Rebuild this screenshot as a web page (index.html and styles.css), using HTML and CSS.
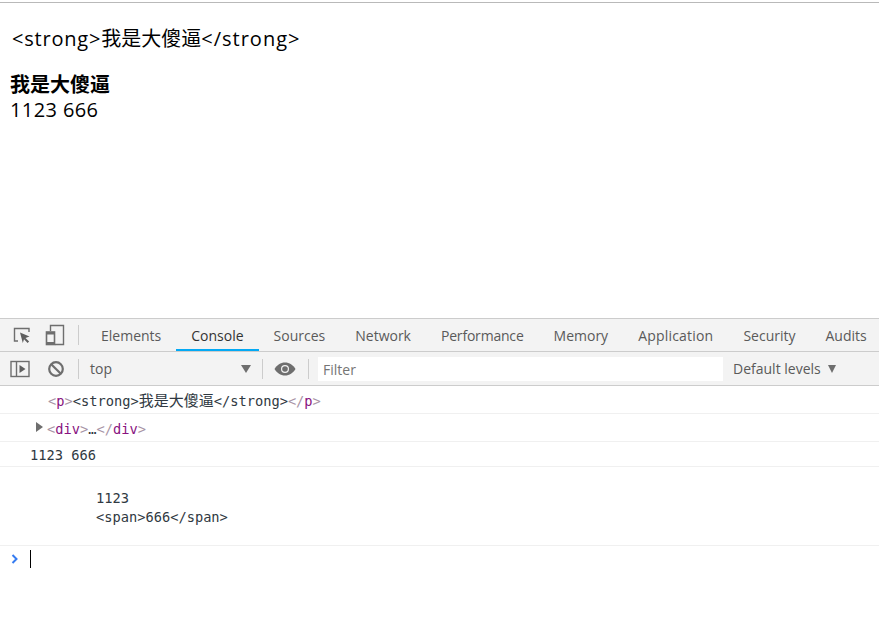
FILE: index.html
```html
<!DOCTYPE html>
<html lang="zh-CN">
<head>
  <meta charset="UTF-8" />
  <title>Console</title>
  <link rel="stylesheet" href="styles.css">
</head>
<body>
  <main class="page">
    <p class="escaped"><span class="latin">&lt;strong&gt;</span>我是大傻逼<span class="latin latin-end">&lt;/strong&gt;</span></p>
    <p class="rendered"><strong>我是大傻逼</strong><br><span class="digits">1123 666</span></p>
  </main>

  <section class="devtools">
    <div class="tabbar">
      <svg class="icon icon-inspect" width="20" height="20" viewBox="0 0 20 20">
        <path d="M6 16H2.5V3.5H17V7" fill="none" stroke="#6e6e6e" stroke-width="1.4"/>
        <path d="M8 7.5l9.5 4-4 1.4 3.6 3.7-1.5 1.4-3.6-3.7-1.2 3.7z" fill="#5f5f5f"/>
      </svg>
      <svg class="icon icon-device" width="20" height="22" viewBox="0 0 20 22">
        <path d="M5.5 7V1.5H18.5V20.500H10" fill="none" stroke="#6e6e6e" stroke-width="1.4"/>
        <rect x="1.500" y="8" width="8" height="12.500" fill="none" stroke="#6e6e6e" stroke-width="1.600"/>
        <rect x="1.500" y="8" width="8" height="2.500" fill="#6e6e6e"/>
        <rect x="1.500" y="18" width="8" height="2.500" fill="#6e6e6e"/>
      </svg>
      <span class="sep"></span>
      <nav class="tabs">
        <a class="tab">Elements</a>
        <a class="tab active">Console</a>
        <a class="tab">Sources</a>
        <a class="tab">Network</a>
        <a class="tab tab-narrow">Performance</a>
        <a class="tab">Memory</a>
        <a class="tab tab-wide">Application</a>
        <a class="tab">Security</a>
        <a class="tab">Audits</a>
      </nav>
    </div>

    <div class="toolbar">
      <svg class="icon icon-sidebar" width="20" height="18" viewBox="0 0 20 18">
        <rect x="1" y="1.500" width="18" height="15" fill="none" stroke="#6e6e6e" stroke-width="1.400"/>
        <path d="M6.500 1.500v15" stroke="#6e6e6e" stroke-width="1.400"/>
        <path d="M9.500 5l6 4-6 4z" fill="#5f5f5f"/>
      </svg>
      <svg class="icon icon-clear" width="18" height="18" viewBox="0 0 18 18">
        <circle cx="9" cy="9" r="6.800" fill="none" stroke="#6e6e6e" stroke-width="2.200"/>
        <path d="M4.200 4.200l9.600 9.600" stroke="#6e6e6e" stroke-width="2.200"/>
      </svg>
      <span class="sep"></span>
      <div class="context">
        <span>top</span>
        <i class="arrow arrow-large"></i>
      </div>
      <span class="sep"></span>
      <svg class="icon icon-eye" width="22" height="14" viewBox="0 0 22 14">
        <path d="M11 .5C6.500 .5 3 3 .5 7c2.500 4 6 6.500 10.500 6.500S19 11 21.500 7C19 3 15.500 .5 11 .5z" fill="#6e6e6e"/>
        <circle cx="11" cy="7" r="4" fill="#f3f3f3"/>
        <circle cx="11" cy="7" r="2.800" fill="#6e6e6e"/>
      </svg>
      <span class="sep"></span>
      <div class="filter">Filter</div>
      <div class="levels">
        <span>Default levels</span>
        <i class="arrow"></i>
      </div>
    </div>

    <div class="console">
      <div class="row row-p"><span class="tag">&lt;<b>p</b>&gt;</span><span class="plain">&lt;strong&gt;<span class="cjk">我是大傻逼</span>&lt;/strong&gt;</span><span class="tag">&lt;/<b>p</b>&gt;</span></div>
      <div class="row row-div"><i class="disclosure"></i><span class="tag">&lt;<b>div</b>&gt;</span><span class="plain">…</span><span class="tag">&lt;/<b>div</b>&gt;</span></div>
      <div class="row row-text">1123 666</div>
      <div class="row row-block">
        <div>1123</div>
        <div>&lt;span&gt;666&lt;/span&gt;</div>
      </div>
      <div class="prompt">
        <svg width="8" height="10" viewBox="0 0 8 10"><path d="M1.500 1l4 4-4 4" fill="none" stroke="#367cf1" stroke-width="2"/></svg>
        <span class="caret"></span>
      </div>
    </div>
  </section>
</body>
</html>
```

FILE: styles.css
```css
* {
  box-sizing: border-box;
}
html,
body {
  height: 100%;
}
body {
  margin: 0;
  display: flex;
  flex-direction: column;
  background: #fff;
  color: #000;
  font-family: "Open Sans", "Noto Sans CJK SC", sans-serif;
  overflow: hidden;
}

.page {
  height: 318px;
  margin-top: 2px;
  border-top: 1px solid #b9b9b9;
  padding: 23px 10px 0;
  font-size: 20px;
  line-height: 26px;
}
.page p {
  margin: 0;
}
.page .escaped {
  padding-left: 2px;
  margin-bottom: 20px;
}
.latin {
  letter-spacing: 0.8px;
}
.latin-end {
  letter-spacing: 1px;
}
.digits {
  letter-spacing: 0.4px;
}
.rendered {
  line-height: 25px;
}
.rendered strong {
  font-weight: 700;
}

.devtools {
  flex: 1;
  display: flex;
  flex-direction: column;
  border-top: 1px solid #ccc;
  margin-top: -2px;
}
.tabbar,
.toolbar {
  display: flex;
  align-items: center;
  background: #f3f3f3;
  border-bottom: 1px solid #ccc;
  color: #5a5a5a;
  font-size: 14px;
}
.tabbar {
  height: 33px;
}
.toolbar {
  height: 34px;
}
.icon {
  flex: none;
}
.icon-inspect {
  margin-left: 12px;
}
.icon-device {
  margin-left: 13px;
}
.sep {
  flex: none;
  width: 1px;
  height: 20px;
  background: #ccc;
}
.tabbar .sep {
  margin-left: 13px;
}
.tabs {
  display: flex;
  height: 100%;
  margin-left: 7px;
}
.tab {
  display: flex;
  align-items: center;
  padding: 0 15px;
  white-space: nowrap;
}
.tab-narrow {
  letter-spacing: -0.2px;
}
.tab-wide {
  letter-spacing: 0.2px;
}
.tab.active {
  color: #333;
  box-shadow: inset 0 -2px 0 #03a9f4;
}

.icon-sidebar {
  margin-left: 10px;
}
.icon-clear {
  margin-left: 17px;
}
.toolbar > .icon-clear + .sep {
  margin-left: 13px;
}
.context {
  display: flex;
  align-items: center;
  justify-content: space-between;
  width: 183px;
  padding: 0 11px;
}
.arrow {
  display: inline-block;
  border-left: 4px solid transparent;
  border-right: 4px solid transparent;
  border-top: 8px solid #6e6e6e;
}
.arrow-large {
  border-left-width: 5px;
  border-right-width: 5px;
}
.icon-eye {
  margin: 0 12px 0 11px;
}
.filter {
  width: 405px;
  height: 24px;
  margin-left: 9px;
  padding-left: 5px;
  background: #fff;
  color: #757575;
  line-height: 26px;
}
.levels {
  display: flex;
  align-items: center;
  gap: 7px;
  margin-left: 10px;
  white-space: nowrap;
}

.console {
  flex: 1;
  font-family: "DejaVu Sans Mono", "Noto Sans CJK SC", monospace;
  font-size: 13.7px;
  color: #303942;
}
.row {
  border-bottom: 1px solid #f0f0f0;
}
.row-p {
  height: 28px;
  padding: 3px 0 0 48px;
}
.row-div {
  position: relative;
  height: 28px;
  padding: 7px 0 0 47px;
}
.row-text {
  height: 25px;
  padding: 5px 0 0 30px;
}
.row-block {
  height: 79px;
  padding: 22px 0 0 96px;
  line-height: 19px;
}
.tag {
  color: #a894a6;
}
.tag b {
  font-weight: 400;
  color: #881280;
}
.cjk {
  font-family: "Noto Sans CJK SC", sans-serif;
  font-size: 15px;
}
.disclosure {
  position: absolute;
  left: 36px;
  top: 8px;
  border-top: 5px solid transparent;
  border-bottom: 5px solid transparent;
  border-left: 7px solid #6e6e6e;
}
.prompt {
  display: flex;
  align-items: center;
  gap: 11px;
  height: 26px;
  padding-left: 11px;
}
.caret {
  width: 1px;
  height: 18px;
  background: #000;
}
```
